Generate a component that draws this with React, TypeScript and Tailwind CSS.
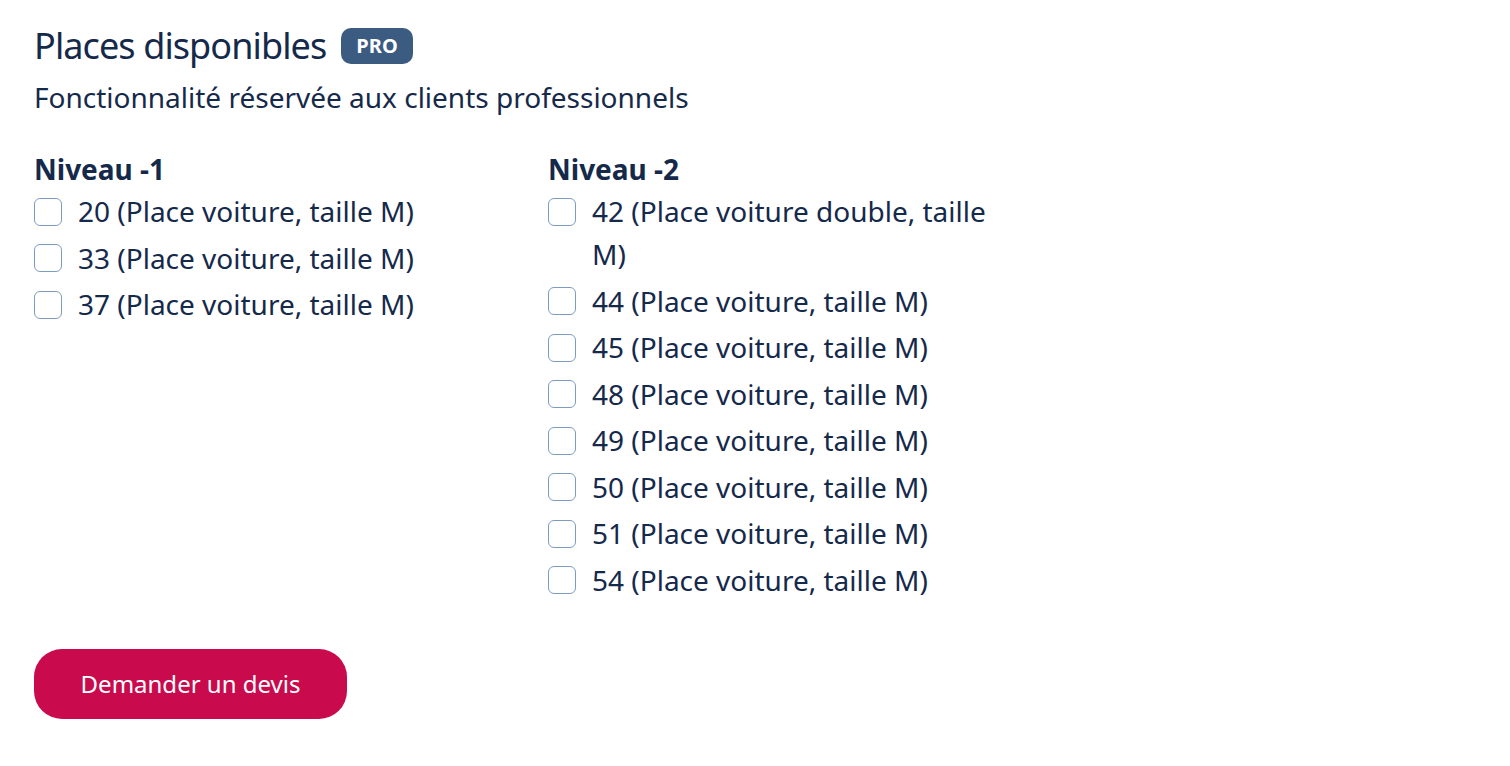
const niveau1 = ["20", "33", "37"];
const niveau2 = [
  "42 (Place voiture double, taille M)",
  "44 (Place voiture, taille M)",
  "45 (Place voiture, taille M)",
  "48 (Place voiture, taille M)",
  "49 (Place voiture, taille M)",
  "50 (Place voiture, taille M)",
  "51 (Place voiture, taille M)",
  "54 (Place voiture, taille M)",
];

function Place({ label }: { label: string }) {
  return (
    <label className="flex items-start gap-4 cursor-pointer">
      <span className="mt-[7.5px] w-7 h-7 shrink-0 rounded-md border border-[#7d9cc4] bg-white" />
      <span className="text-[28px] leading-[43px]">{label}</span>
    </label>
  );
}

export default function App() {
  return (
    <div className="min-h-screen bg-white text-[#15294b] px-[34px] pt-[26px] font-[Noto_Sans]">
      <div className="flex items-center gap-[15px]">
        <h2 className="text-4xl leading-10 tracking-tight">Places disponibles</h2>
        <span className="h-9 px-[15px] rounded-[10px] bg-[#3b5b80] text-white text-[20px] font-bold flex items-center">
          PRO
        </span>
      </div>
      <p className="mt-[15px] text-[28px] leading-8">Fonctionnalité réservée aux clients professionnels</p>

      <div className="mt-10 flex">
        <div className="w-[514px]">
          <h3 className="text-[28px] leading-8 font-bold">Niveau -1</h3>
          <div className="mt-[5px] flex flex-col gap-[3.5px]">
            {niveau1.map((n) => (
              <Place key={n} label={`${n} (Place voiture, taille M)`} />
            ))}
          </div>
        </div>
        <div className="w-[460px]">
          <h3 className="text-[28px] leading-8 font-bold">Niveau -2</h3>
          <div className="mt-[5px] flex flex-col gap-[3.5px]">
            {niveau2.map((l) => (
              <Place key={l} label={l} />
            ))}
          </div>
        </div>
      </div>

      <button className="mt-[47px] h-[70px] w-[313px] rounded-[28px] bg-[#c90a4d] text-white text-[24px]">
        Demander un devis
      </button>
    </div>
  );
}
